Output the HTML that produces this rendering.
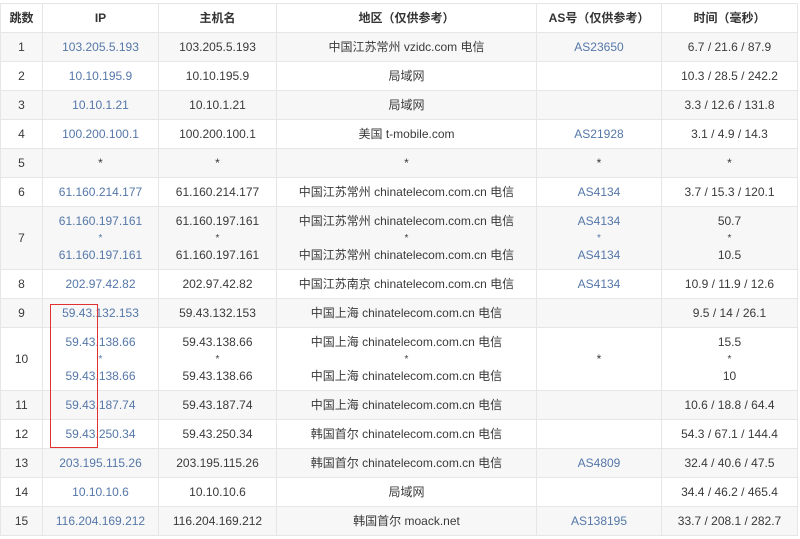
<!DOCTYPE html>
<html><head><meta charset="utf-8"><style>
body{margin:0;background:#fff;font-family:"Liberation Sans","Noto Sans CJK SC",sans-serif;font-size:12px;color:#3a3a3a;}
table{position:absolute;left:0;top:3px;border-collapse:collapse;table-layout:fixed;width:797px;}
td,th{border:1px solid #e6e6e6;text-align:center;padding:0;line-height:16px;}
th{height:28px;font-weight:bold;color:#333;font-size:12px}
tr.g td{background:#f7f7f8}
td{height:28px}
.b{color:#5577a8}
tr.d td{height:62px}
.s{font-size:10px;line-height:16px}
#box{position:absolute;left:50px;top:304px;width:46px;height:142px;border:1.5px solid #e03030;}
</style></head><body>
<table>
<colgroup><col style="width:42px"><col style="width:116px"><col style="width:118px"><col style="width:260px"><col style="width:125px"><col style="width:136px"></colgroup>
<tr><th>跳数</th><th>IP</th><th>主机名</th><th>地区（仅供参考）</th><th>AS号（仅供参考）</th><th>时间（毫秒）</th></tr>
<tr class="g"><td>1</td><td class="b">103.205.5.193</td><td>103.205.5.193</td><td>中国江苏常州 vzidc.com 电信</td><td class="b">AS23650</td><td>6.7 / 21.6 / 87.9</td></tr>
<tr><td>2</td><td class="b">10.10.195.9</td><td>10.10.195.9</td><td>局域网</td><td></td><td>10.3 / 28.5 / 242.2</td></tr>
<tr class="g"><td>3</td><td class="b">10.10.1.21</td><td>10.10.1.21</td><td>局域网</td><td></td><td>3.3 / 12.6 / 131.8</td></tr>
<tr><td>4</td><td class="b">100.200.100.1</td><td>100.200.100.1</td><td>美国 t-mobile.com</td><td class="b">AS21928</td><td>3.1 / 4.9 / 14.3</td></tr>
<tr class="g"><td>5</td><td>*</td><td>*</td><td>*</td><td>*</td><td>*</td></tr>
<tr><td>6</td><td class="b">61.160.214.177</td><td>61.160.214.177</td><td>中国江苏常州 chinatelecom.com.cn 电信</td><td class="b">AS4134</td><td>3.7 / 15.3 / 120.1</td></tr>
<tr class="g d"><td>7</td><td class="b">61.160.197.161<br><span class="s">*</span><br>61.160.197.161</td><td>61.160.197.161<br><span class="s">*</span><br>61.160.197.161</td><td>中国江苏常州 chinatelecom.com.cn 电信<br><span class="s">*</span><br>中国江苏常州 chinatelecom.com.cn 电信</td><td class="b">AS4134<br><span class="s">*</span><br>AS4134</td><td>50.7<br><span class="s">*</span><br>10.5</td></tr>
<tr><td>8</td><td class="b">202.97.42.82</td><td>202.97.42.82</td><td>中国江苏南京 chinatelecom.com.cn 电信</td><td class="b">AS4134</td><td>10.9 / 11.9 / 12.6</td></tr>
<tr class="g"><td>9</td><td class="b">59.43.132.153</td><td>59.43.132.153</td><td>中国上海 chinatelecom.com.cn 电信</td><td></td><td>9.5 / 14 / 26.1</td></tr>
<tr class="d"><td>10</td><td class="b">59.43.138.66<br><span class="s">*</span><br>59.43.138.66</td><td>59.43.138.66<br><span class="s">*</span><br>59.43.138.66</td><td>中国上海 chinatelecom.com.cn 电信<br><span class="s">*</span><br>中国上海 chinatelecom.com.cn 电信</td><td>*</td><td>15.5<br><span class="s">*</span><br>10</td></tr>
<tr class="g"><td>11</td><td class="b">59.43.187.74</td><td>59.43.187.74</td><td>中国上海 chinatelecom.com.cn 电信</td><td></td><td>10.6 / 18.8 / 64.4</td></tr>
<tr><td>12</td><td class="b">59.43.250.34</td><td>59.43.250.34</td><td>韩国首尔 chinatelecom.com.cn 电信</td><td></td><td>54.3 / 67.1 / 144.4</td></tr>
<tr class="g"><td>13</td><td class="b">203.195.115.26</td><td>203.195.115.26</td><td>韩国首尔 chinatelecom.com.cn 电信</td><td class="b">AS4809</td><td>32.4 / 40.6 / 47.5</td></tr>
<tr><td>14</td><td class="b">10.10.10.6</td><td>10.10.10.6</td><td>局域网</td><td></td><td>34.4 / 46.2 / 465.4</td></tr>
<tr class="g"><td>15</td><td class="b">116.204.169.212</td><td>116.204.169.212</td><td>韩国首尔 moack.net</td><td class="b">AS138195</td><td>33.7 / 208.1 / 282.7</td></tr>
</table>
<div id="box"></div>
</body></html>
